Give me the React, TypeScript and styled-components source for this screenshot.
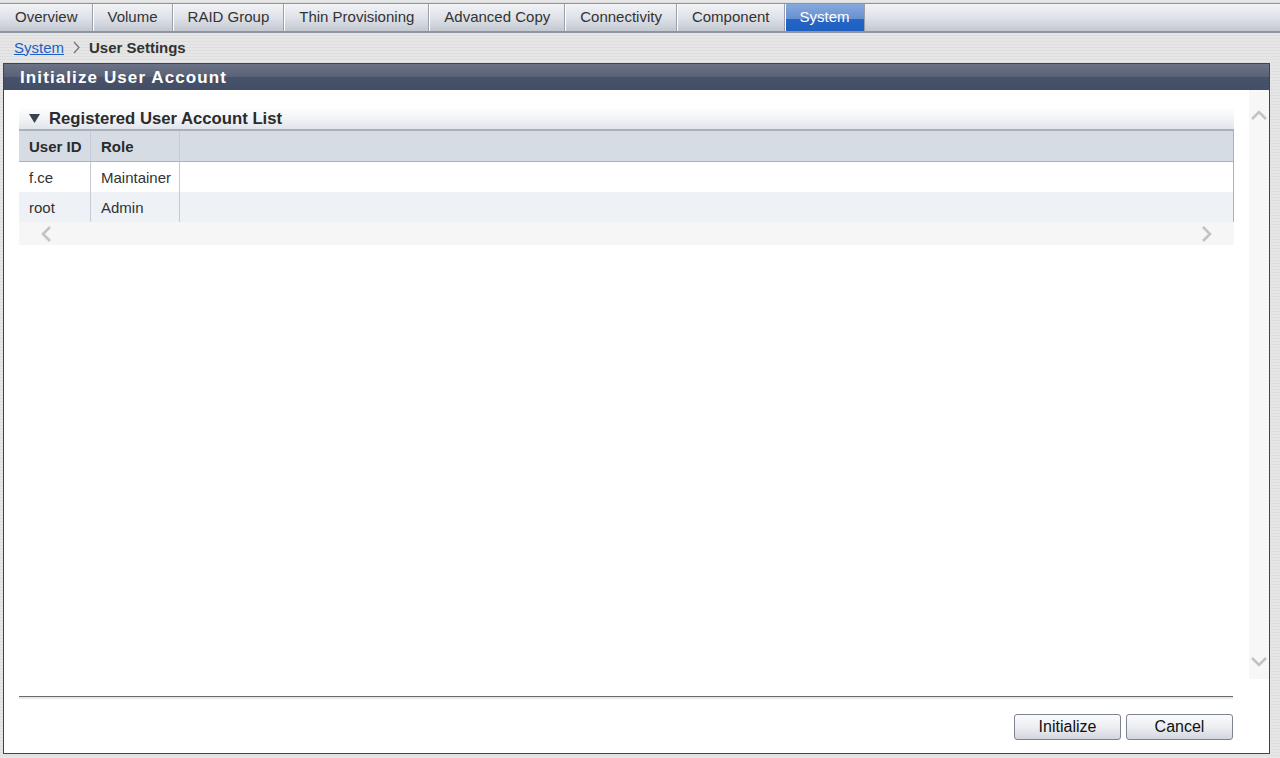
import styled, { createGlobalStyle } from "styled-components";

const GlobalStyle = createGlobalStyle`
  html, body {
    margin: 0;
    padding: 0;
  }
  body {
    font-family: "Liberation Sans", Arial, sans-serif;
    color: #222;
    background: repeating-linear-gradient(
      to bottom,
      #e6e6e6 0px,
      #e6e6e6 2px,
      #dedede 2px,
      #dedede 3px
    );
  }
`;

const Page = styled.div`
  display: flex;
  flex-direction: column;
  height: 758px;
  overflow: hidden;
`;

const TabBar = styled.div`
  display: flex;
  margin-top: 3px;
  height: 27px;
  border-top: 1px solid #8d929b;
  border-bottom: 2px solid #8f959f;
  background: linear-gradient(to bottom, #f1f3f6 0%, #dfe2e8 50%, #c3c8d1 100%);
`;

const Tab = styled.div<{ $active?: boolean }>`
  display: flex;
  align-items: center;
  padding: 0 14px 2px 15px;
  font-size: 15px;
  color: ${(p) => (p.$active ? "#ffffff" : "#333")};
  border-right: 1px solid #9aa0aa;
  box-shadow: inset 1px 0 0 #ffffff;
  background: ${(p) =>
    p.$active
      ? "linear-gradient(to bottom, #86a9dc 0%, #6690d2 55%, #2465c6 56%, #1f5fc0 100%)"
      : "linear-gradient(to bottom, #f1f3f6 0%, #dfe2e8 50%, #c3c8d1 100%)"};
  &:first-child {
    box-shadow: none;
  }
`;

const Breadcrumb = styled.div`
  display: flex;
  align-items: center;
  gap: 8px;
  height: 28px;
  padding: 0 0 2px 14px;
  font-size: 15px;
`;

const CrumbLink = styled.a`
  color: #1c5fc6;
  text-decoration: underline;
`;

const CrumbCurrent = styled.span`
  font-weight: bold;
  color: #333;
`;

const Panel = styled.div`
  flex: 1;
  display: flex;
  flex-direction: column;
  margin: 0 10px 4px 3px;
  border: 1px solid #3c4354;
  background: #fff;
  min-height: 0;
`;

const PanelHeader = styled.div`
  height: 25px;
  display: flex;
  align-items: center;
  padding: 1px 0 0 16px;
  background: linear-gradient(to bottom, #6c7386 0%, #596176 50%, #47526a 52%, #434e67 100%);
  color: #fff;
  font-size: 17px;
  font-weight: bold;
  letter-spacing: 1.1px;
`;

const PanelBody = styled.div`
  flex: 1;
  display: flex;
  min-height: 0;
`;

const Main = styled.div`
  flex: 1;
  padding: 17px 15px 0 15px;
`;

const VScroll = styled.div`
  width: 20px;
  background: #f7f7f7;
  display: flex;
  flex-direction: column;
  justify-content: space-between;
  align-items: center;
  padding: 18px 0 10px;
`;

const SectionHeader = styled.div`
  height: 21px;
  display: flex;
  align-items: center;
  gap: 9px;
  padding: 1px 0 0 10px;
  font-size: 16.7px;
  font-weight: bold;
  color: #2b2b2b;
  background: linear-gradient(to bottom, #ffffff 0%, #f2f4f7 50%, #e1e5ea 100%);
  border-bottom: 2px solid #a9b1bd;
`;

const Table = styled.div`
  border-right: 1px solid #aab2be;
`;

const Row = styled.div<{ $head?: boolean; $alt?: boolean }>`
  display: grid;
  grid-template-columns: 72px 89px 1fr;
  height: 30px;
  background: ${(p) => (p.$head ? "#d6dce4" : p.$alt ? "#eef2f6" : "#ffffff")};
  border-bottom: ${(p) => (p.$head ? "1px solid #a9b2bf" : "none")};
  font-weight: ${(p) => (p.$head ? "bold" : "normal")};
  color: ${(p) => (p.$head ? "#2b2b2b" : "#333")};
  font-size: 15px;
`;

const Cell = styled.div`
  display: flex;
  align-items: center;
  padding-left: 10px;
  border-right: 1px solid #c4cbd5;
  &:last-child {
    border-right: none;
  }
`;

const HScroll = styled.div`
  height: 23px;
  background: #f6f6f6;
  display: flex;
  justify-content: space-between;
  align-items: center;
  padding: 0 20px 0 20px;
`;

const Footer = styled.div`
  padding: 17px 36px 13px 15px;
`;

const Separator = styled.div`
  height: 1px;
  background: #666a70;
  border-bottom: 2px solid #e8e8e8;
  margin-bottom: 15px;
`;

const ButtonRow = styled.div`
  display: flex;
  justify-content: flex-end;
  gap: 5px;
`;

const Button = styled.button`
  width: 107px;
  height: 26px;
  border: 1px solid #7d838f;
  border-radius: 3px;
  background: linear-gradient(to bottom, #fbfbfc 0%, #eceef1 50%, #d3d7de 100%);
  font-family: "Liberation Sans", Arial, sans-serif;
  font-size: 16px;
  color: #111;
  padding: 0;
`;

function Chevron({ dir }: { dir: "up" | "down" | "left" | "right" }) {
  const paths = {
    up: "M2 11 L9 4 L16 11",
    down: "M2 4 L9 11 L16 4",
    left: "M11 2 L4 9 L11 16",
    right: "M4 2 L11 9 L4 16",
  };
  const vertical = dir === "up" || dir === "down";
  return (
    <svg
      width={vertical ? 18 : 15}
      height={vertical ? 15 : 18}
      viewBox={vertical ? "0 0 18 15" : "0 0 15 18"}
    >
      <path d={paths[dir]} fill="none" stroke="#c3c3c3" strokeWidth="2.6" />
    </svg>
  );
}

const tabs = [
  "Overview",
  "Volume",
  "RAID Group",
  "Thin Provisioning",
  "Advanced Copy",
  "Connectivity",
  "Component",
  "System",
];

const users = [
  { id: "f.ce", role: "Maintainer" },
  { id: "root", role: "Admin" },
];

export default function App() {
  return (
    <Page>
      <GlobalStyle />
      <TabBar>
        {tabs.map((t) => (
          <Tab key={t} $active={t === "System"}>
            {t}
          </Tab>
        ))}
      </TabBar>
      <Breadcrumb>
        <CrumbLink>System</CrumbLink>
        <svg width="9" height="13" viewBox="0 0 9 13">
          <path d="M2 1 L7 6.5 L2 12" fill="none" stroke="#777" strokeWidth="1.4" />
        </svg>
        <CrumbCurrent>User Settings</CrumbCurrent>
      </Breadcrumb>
      <Panel>
        <PanelHeader>Initialize User Account</PanelHeader>
        <PanelBody>
          <Main>
            <SectionHeader>
              <svg width="11" height="9" viewBox="0 0 11 9">
                <path d="M0 0 L11 0 L5.5 9 Z" fill="#3a4150" />
              </svg>
              Registered User Account List
            </SectionHeader>
            <Table>
              <Row $head>
                <Cell>User ID</Cell>
                <Cell>Role</Cell>
                <Cell />
              </Row>
              {users.map((u, i) => (
                <Row key={u.id} $alt={i % 2 === 1}>
                  <Cell>{u.id}</Cell>
                  <Cell>{u.role}</Cell>
                  <Cell />
                </Row>
              ))}
            </Table>
            <HScroll>
              <Chevron dir="left" />
              <Chevron dir="right" />
            </HScroll>
          </Main>
          <VScroll>
            <Chevron dir="up" />
            <Chevron dir="down" />
          </VScroll>
        </PanelBody>
        <Footer>
          <Separator />
          <ButtonRow>
            <Button>Initialize</Button>
            <Button>Cancel</Button>
          </ButtonRow>
        </Footer>
      </Panel>
    </Page>
  );
}
